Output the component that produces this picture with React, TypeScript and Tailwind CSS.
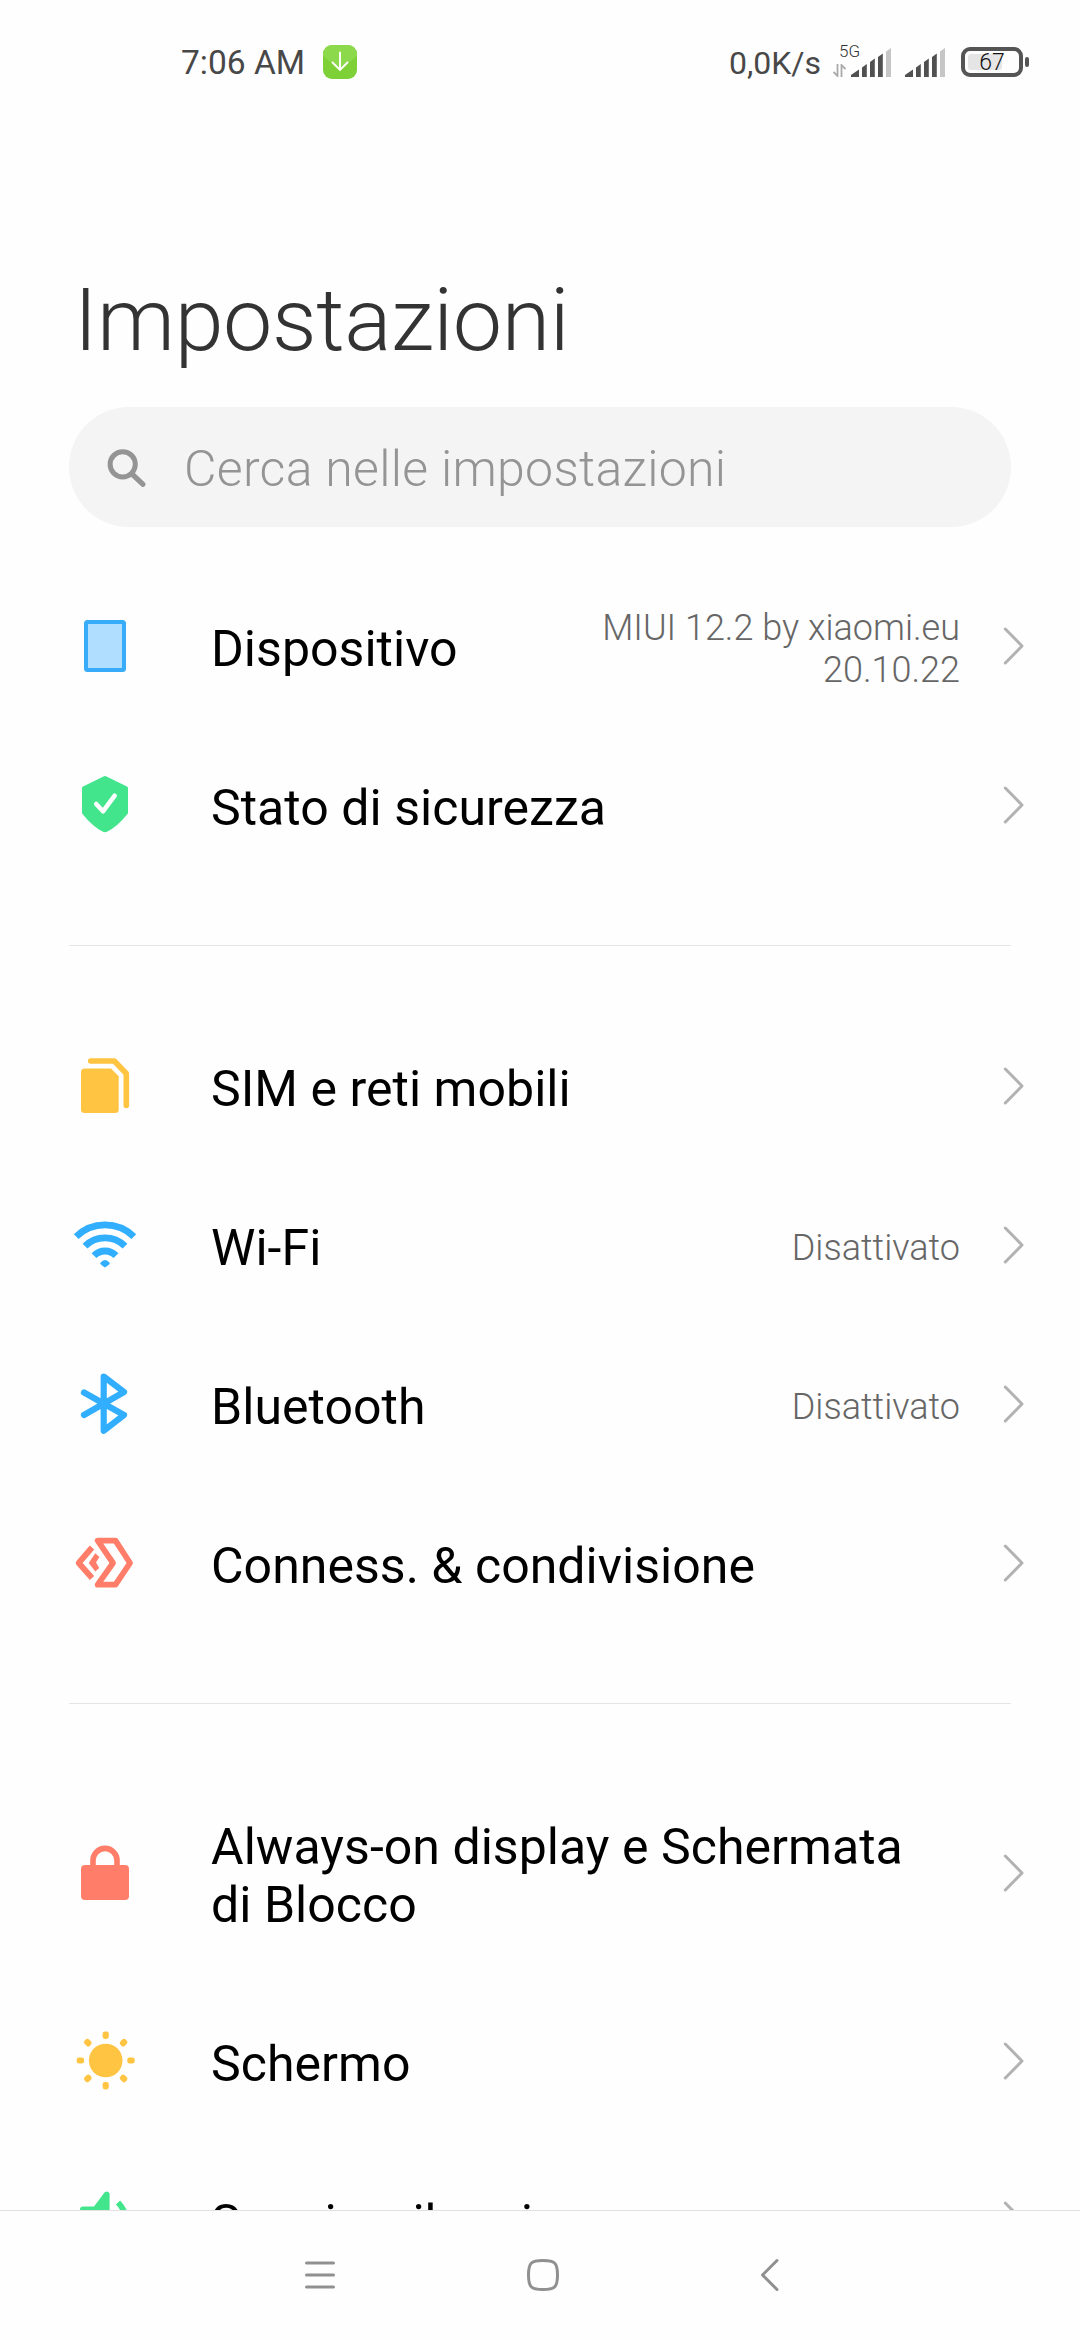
import { ReactNode } from 'react';

interface SettingsItem {
    label: string;
    icon: ReactNode;
    value?: string;
    tall?: boolean;
}

// Every row icon is drawn around its own centre
function RowIcon({ children }: { children: ReactNode }) {
    return (
        <svg width="66" height="66" viewBox="-33 -33 66 66" fill="none" className="-mt-px shrink-0">
            {children}
        </svg>
    );
}

const DeviceIcon = () => (
    <RowIcon>
        <rect x="-19" y="-24" width="38" height="48" rx="1.5" fill="#b0defe" stroke="#39acf9" strokeWidth="4" />
    </RowIcon>
);

const ShieldIcon = () => (
    <RowIcon>
        <path
            d="M-1.5 -28.6Q0 -29.3 1.5 -28.6L22 -18.6Q23 -18 23 -17V7.5Q23 8.5 22.3 9.3Q12 22 2 26.8Q0 27.7 -2 26.8Q-12 22 -22.3 9.3Q-23 8.5 -23 7.5V-17Q-23 -18 -22 -18.6Z"
            fill="#43e58c"
        />
        <path d="M-8.8 -1L-2 6.3L9.7 -9.3" stroke="#fff" strokeWidth="4.5" strokeLinecap="round" strokeLinejoin="round" />
    </RowIcon>
);

const SimIcon = () => (
    <RowIcon>
        <path
            d="M-20.5 -17.5H6L13.7 -9.8V23.5Q13.7 27 10.2 27H-20.5Q-24 27 -24 23.5V-14Q-24 -17.5 -20.5 -17.5Z"
            fill="#ffc442"
        />
        <path d="M-14.3 -25H9.3L21.3 -12.5V19.5" stroke="#ffc442" strokeWidth="5.6" strokeLinecap="round" strokeLinejoin="round" />
    </RowIcon>
);

const WifiIcon = () => (
    <RowIcon>
        <g stroke="#32aeff" strokeWidth="6.8">
            <path d="M-28.8 -8.4A41.4 41.4 0 0 1 28.8 -8.4" />
            <path d="M-20 1.2A28.4 28.4 0 0 1 20 1.2" />
            <path d="M-11 10.6A15.5 15.5 0 0 1 11 10.6" />
        </g>
        <path d="M-4.8 18Q0 12.2 4.8 18Q5.2 19 0 22.5Q-5.2 19 -4.8 18Z" fill="#32aeff" />
    </RowIcon>
);

const BluetoothIcon = () => (
    <RowIcon>
        <path
            d="M-21 -11.5L19 11L-1.3 26.8V-27.5L19 -12L-21 11"
            stroke="#32aeff"
            strokeWidth="6.2"
            strokeLinecap="round"
            strokeLinejoin="round"
        />
    </RowIcon>
);

const ShareIcon = () => (
    <RowIcon>
        <g stroke="#ff7d69" strokeWidth="5.8" strokeLinejoin="round">
            <path d="M-7.3 -22.3H10.5L25 0L10.5 21.7H-7.3L8 0Z" />
            <path d="M-13 -15.5L-26.3 0L-13 15" />
        </g>
        <path d="M-16.3 0L-9.7 -9.8L-5.6 -6L-9 -0.5L-5.8 5L-9.7 8.6Z" fill="#ff7d69" />
    </RowIcon>
);

const LockIcon = () => (
    <RowIcon>
        <rect x="-24" y="-8" width="48" height="35" rx="4" fill="#ff7d69" />
        <path d="M-12 -7V-12.6A12 12 0 0 1 12 -12.6V-7" stroke="#ff7d69" strokeWidth="5.6" />
    </RowIcon>
);

const RAY_ANGLES = [0, 45, 90, 135, 180, 225, 270, 315];

const SunIcon = () => (
    <RowIcon>
        <g transform="translate(0.7 -0.5)" fill="#ffc442">
            <circle r="16.8" />
            {RAY_ANGLES.map((angle) => (
                <rect key={angle} x="-3.1" y="-29" width="6.2" height="7.4" rx="2.4" transform={`rotate(${angle})`} />
            ))}
        </g>
    </RowIcon>
);

const SoundIcon = () => (
    <RowIcon>
        <path
            d="M-22 -13.5H-11L-0.5 -27.5Q2.8 -30 4.6 -26.5V27Q2 30 -1 27L-11 14H-22Q-25 14 -25 11V-10.5Q-25 -13.5 -22 -13.5Z"
            fill="#43e58c"
        />
        <path d="M13 -17.5Q21 -9 21 0Q21 9 13 17.5" stroke="#43e58c" strokeWidth="5.8" />
    </RowIcon>
);

const GROUPS: SettingsItem[][] = [
    [
        { label: 'Dispositivo', icon: <DeviceIcon />, value: 'MIUI 12.2 by xiaomi.eu 20.10.22' },
        { label: 'Stato di sicurezza', icon: <ShieldIcon /> },
    ],
    [
        { label: 'SIM e reti mobili', icon: <SimIcon /> },
        { label: 'Wi-Fi', icon: <WifiIcon />, value: 'Disattivato' },
        { label: 'Bluetooth', icon: <BluetoothIcon />, value: 'Disattivato' },
        { label: 'Conness. & condivisione', icon: <ShareIcon /> },
    ],
    [
        { label: 'Always-on display e Schermata di Blocco', icon: <LockIcon />, tall: true },
        { label: 'Schermo', icon: <SunIcon /> },
        { label: 'Suoni e vibrazione', icon: <SoundIcon /> },
    ],
];

function SignalBars() {
    return (
        <svg width="40" height="29" viewBox="0 0 40 29" className="shrink-0">
            <g fill="#505050">
                <path d="M0 29V27L8 21.5V29Z" />
                <path d="M11 29V19.5L15.8 16V29Z" />
                <path d="M19 29V14L23.8 10.5V29Z" />
                <path d="M27 29V9L31.8 5.5V29Z" />
            </g>
            <path d="M35 29V3.5L40 0V29Z" fill="#c6c6c6" />
        </svg>
    );
}

function StatusBar() {
    return (
        <header className="flex h-[124px] shrink-0 items-center pl-[181px] pr-[51px] text-[#484848]">
            <span className="w-[125px] whitespace-nowrap pt-px text-[33.5px] leading-none">7:06 AM</span>
            <svg width="34" height="34" viewBox="0 0 34 34" fill="none" className="ml-[17px]">
                <rect width="34" height="34" rx="9" fill="#7dd035" />
                <path d="M0 11V9A9 9 0 0 1 9 0H25A9 9 0 0 1 34 9V11L17 25Z" fill="#8dd94c" />
                <path d="M17 7.5V25M9.5 17.5L17 25L24.5 17.5" stroke="#fff" strokeWidth="1.9" strokeLinecap="round" />
            </svg>

            <span className="ml-auto pt-px text-[32px] leading-none">0,0K/s</span>
            <div className="relative ml-[12px] flex h-[30px] w-[58px] items-end justify-end">
                <span className="absolute -top-[4px] left-[6px] text-[17px] font-light leading-none text-[#333]">5G</span>
                <svg width="13" height="13" viewBox="0 0 13 13" fill="none" className="absolute bottom-0 left-0">
                    <path d="M4.5 0V12L0.5 8" stroke="#aaa" strokeWidth="1.8" />
                    <path d="M8.5 13V1L12.5 5" stroke="#aaa" strokeWidth="1.8" />
                </svg>
                <SignalBars />
            </div>
            <div className="ml-[14px] flex h-[30px] items-end">
                <SignalBars />
            </div>
            <div className="ml-[16px] flex items-center gap-[2px]">
                <div className="relative flex h-[30px] w-[62px] items-center justify-center rounded-[9px] border-4 border-[#555]">
                    <div className="absolute left-[3px] top-[3px] h-4 w-[34px] rounded-[3px] bg-[#e5e5e5]" />
                    <span className="relative pt-px text-[23px] font-light leading-none text-[#111]">67</span>
                </div>
                <div className="h-[10px] w-1 rounded-[2px] bg-[#555]" />
            </div>
        </header>
    );
}

function Chevron() {
    return (
        <svg width="22" height="40" viewBox="0 0 22 40" fill="none" className="-mt-px ml-[43px] shrink-0">
            <path d="M2.3 3L19 20L2.3 37" stroke="#b2b2b2" strokeWidth="3" strokeLinecap="round" strokeLinejoin="round" />
        </svg>
    );
}

function SettingsRow({ label, icon, value, tall }: SettingsItem) {
    return (
        <div className={`flex shrink-0 items-center pl-[72px] pr-[55px] ${tall ? 'h-[217px]' : 'h-[159px]'}`}>
            {icon}
            <span className="ml-[73px] max-w-[720px] pt-[5px] text-[50px] leading-[58px] tracking-[0.04px] text-black">{label}</span>
            {value && (
                <span className="ml-auto max-w-[380px] pt-[5px] text-right text-[36px] font-light leading-[42px] text-[#666]">
                    {value}
                </span>
            )}
            <div className={value ? '' : 'ml-auto'}>
                <Chevron />
            </div>
        </div>
    );
}

function NavBar() {
    return (
        <nav className="flex h-[130px] shrink-0 items-center border-t border-[#e2e2e2]">
            <svg width="34" height="34" viewBox="0 0 34 34" className="-mt-0.5 ml-[303px]" stroke="#909090" strokeWidth="3" strokeLinecap="round">
                <path d="M3.5 5H30.5M3.5 17H30.5M3.5 29H30.5" />
            </svg>
            <svg width="34" height="34" viewBox="0 0 34 34" className="-mt-0.5 ml-[189px]" fill="none" stroke="#909090" strokeWidth="3">
                <path d="M17 2.5C29 2.5 31.5 5 31.5 17S29 31.5 17 31.5S2.5 29 2.5 17S5 2.5 17 2.5Z" />
            </svg>
            <svg width="22" height="34" viewBox="0 0 22 34" className="-mt-0.5 ml-[199px]" fill="none" stroke="#909090" strokeWidth="3" strokeLinecap="round" strokeLinejoin="round">
                <path d="M18 2.5L3.5 17L18 31.5" />
            </svg>
        </nav>
    );
}

export default function App() {
    return (
        <div className="flex h-[2340px] w-[1080px] flex-col overflow-hidden bg-[#fefefe] font-['Roboto',sans-serif]">
            <StatusBar />

            <main className="flex min-h-0 flex-1 flex-col overflow-hidden">
                <h1 className="mt-[144px] pl-[74px] text-[88px] font-light leading-[104px] tracking-[-0.4px] text-[#333]">Impostazioni</h1>

                {/* Search field */}
                <div className="mx-[69px] mt-[35px] flex h-[120px] shrink-0 items-center rounded-full bg-[#f4f4f4] pl-[37px]">
                    <svg width="42" height="42" viewBox="0 0 42 42" fill="none" stroke="#949494" strokeLinecap="round">
                        <circle cx="16.7" cy="18.3" r="12.6" strokeWidth="5" />
                        <path d="M26 28L37 38.3" strokeWidth="5.2" />
                    </svg>
                    <span className="ml-[36px] pt-[3px] text-[50px] font-light leading-none tracking-[0.3px] text-[#949494]">Cerca nelle impostazioni</span>
                </div>

                <div className="mt-10 flex flex-col">
                    {GROUPS.map((group, index) => (
                        <section key={index} className="flex flex-col">
                            {index > 0 && <hr className="mx-[69px] mb-[61px] mt-[60px] border-t border-[#e5e5e5]" />}
                            {group.map((item) => (
                                <SettingsRow key={item.label} {...item} />
                            ))}
                        </section>
                    ))}
                </div>
            </main>

            <NavBar />
        </div>
    );
}
